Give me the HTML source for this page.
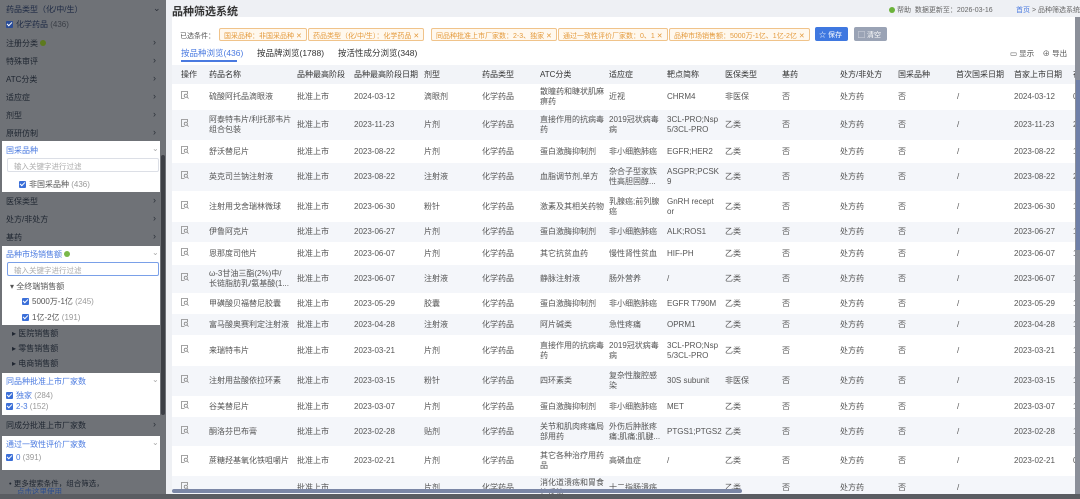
<!DOCTYPE html>
<html><head><meta charset="utf-8">
<style>
*{margin:0;padding:0;box-sizing:border-box}
body{width:1080px;height:499px;overflow:hidden;background:#eef0f4;font-family:"Liberation Sans","Noto Sans CJK SC",sans-serif;font-size:8px;color:#555;position:relative}
.a{position:absolute;white-space:nowrap}
#side{position:absolute;left:0;top:0;width:166px;height:499px;background:#6f7277}
.si{position:absolute;left:6px;color:#1e2530;font-size:8px}
.ar{position:absolute;left:153px;color:#2a2f38;font-size:9px}
.wp{position:absolute;left:2px;width:158px;background:#fff}
.cb{display:inline-block;width:7px;height:7px;background:#3b6fd8;border-radius:1px;vertical-align:-1px;margin-right:3px;position:relative}
.cb:after{content:"";position:absolute;left:2px;top:0px;width:2px;height:4px;border:solid #fff;border-width:0 1px 1px 0;transform:rotate(45deg)}
.blue{color:#4a7ae0}
.inp{position:absolute;left:5px;width:152px;height:14px;border:1px solid #dcdfe6;border-radius:2px;color:#aaa;font-size:7.5px;padding:2px 6px}
#main{position:absolute;left:172px;top:17px;width:904px;height:482px;background:#fff}
.tag{position:absolute;top:28px;height:13px;border:1px solid #f0c38a;border-radius:2px;background:#fff8ee;color:#e49a3c;font-size:7px;padding:2px 4px;white-space:nowrap}
.th{position:absolute;top:65px;height:19px;width:904px;left:172px;background:#f2f4f8}
.row{position:absolute;left:172px;width:904px}
.c{position:absolute;font-size:8px;color:#555;line-height:10px}
.h{position:absolute;font-size:8px;color:#333;top:69px}
</style></head><body>

<div id="side">
 <div class="si" style="top:4px;color:#1e2a44">药品类型（化/中/生）</div><div class="ar" style="top:3px">⌄</div>
 <div class="si" style="top:19px;color:#1e2a44"><span class="cb" style="background:#2a4c96"></span>化学药品 <span style="color:#3b3f47">(436)</span></div>
 <div class="si" style="top:38px">注册分类 <span style="display:inline-block;width:6px;height:6px;border-radius:50%;background:#5d7a1e"></span></div><div class="ar" style="top:37px">›</div>
 <div class="si" style="top:56px">特殊审评</div><div class="ar" style="top:55px">›</div>
 <div class="si" style="top:74px">ATC分类</div><div class="ar" style="top:73px">›</div>
 <div class="si" style="top:92px">适应症</div><div class="ar" style="top:91px">›</div>
 <div class="si" style="top:110px">剂型</div><div class="ar" style="top:109px">›</div>
 <div class="si" style="top:128px">原研仿制</div><div class="ar" style="top:127px">›</div>
 <div class="wp" style="top:141px;height:51px">
  <div class="a blue" style="left:4px;top:4px">国采品种</div><div class="a" style="left:150px;top:3px;color:#aaa">⌄</div>
  <div class="inp" style="top:17px">输入关键字进行过滤</div>
  <div class="a" style="left:17px;top:38px;color:#555"><span class="cb"></span>非国采品种 <span style="color:#999">(436)</span></div>
 </div>
 <div class="si" style="top:196px">医保类型</div><div class="ar" style="top:195px">›</div>
 <div class="si" style="top:214px">处方/非处方</div><div class="ar" style="top:213px">›</div>
 <div class="si" style="top:232px">基药</div><div class="ar" style="top:231px">›</div>
 <div class="wp" style="top:246px;height:79px">
  <div class="a blue" style="left:4px;top:3px">品种市场销售额 <span style="display:inline-block;width:6px;height:6px;border-radius:50%;background:#7ab84a"></span></div><div class="a" style="left:150px;top:2px;color:#aaa">⌄</div>
  <div class="inp" style="top:16px;border-color:#7aa0e8">输入关键字进行过滤</div>
  <div class="a" style="left:8px;top:35px;color:#555">▾ 全终端销售额</div>
  <div class="a" style="left:20px;top:50px;color:#555"><span class="cb"></span>5000万-1亿 <span style="color:#999">(245)</span></div>
  <div class="a" style="left:20px;top:66px;color:#555"><span class="cb"></span>1亿-2亿 <span style="color:#999">(191)</span></div>
 </div>
 <div class="si" style="top:328px;left:12px">▸ 医院销售额</div>
 <div class="si" style="top:343px;left:12px">▸ 零售销售额</div>
 <div class="si" style="top:358px;left:12px">▸ 电商销售额</div>
 <div class="wp" style="top:373px;height:42px">
  <div class="a blue" style="left:4px;top:3px">同品种批准上市厂家数</div><div class="a" style="left:150px;top:2px;color:#aaa">⌄</div>
  <div class="a blue" style="left:4px;top:17px"><span class="cb"></span>独家 <span style="color:#999">(284)</span></div>
  <div class="a blue" style="left:4px;top:29px"><span class="cb"></span>2-3 <span style="color:#999">(152)</span></div>
 </div>
 <div class="si" style="top:420px">同成分批准上市厂家数</div><div class="ar" style="top:419px">›</div>
 <div class="wp" style="top:436px;height:34px">
  <div class="a blue" style="left:4px;top:3px">通过一致性评价厂家数</div><div class="a" style="left:150px;top:2px;color:#aaa">⌄</div>
  <div class="a blue" style="left:4px;top:17px"><span class="cb"></span>0 <span style="color:#999">(391)</span></div>
 </div>
 <div class="a" style="left:9px;top:478px;color:#1e2530;font-size:7.5px">• 更多搜索条件，组合筛选，</div>
 <div class="a" style="left:17px;top:486px;color:#2b4c8c;font-size:7.5px;text-decoration:underline">点击这里使用</div>
 <div class="a" style="left:161px;top:155px;width:4px;height:260px;background:#3c3f45;border-radius:2px"></div>
</div>

<div class="a" style="left:172px;top:3px;font-size:11px;font-weight:bold;color:#333">品种筛选系统</div>
<div class="a" style="left:889px;top:5px;font-size:7px;color:#666"><span style="display:inline-block;width:6px;height:6px;border-radius:50%;background:#6bb33a;vertical-align:-1px"></span> 帮助 &nbsp;数据更新至：2026-03-16</div>
<div class="a" style="left:1016px;top:5px;font-size:7px;color:#666"><span class="blue">首页</span> &gt; 品种筛选系统</div>

<div id="main"></div>
<div class="a" style="left:180px;top:31px;color:#555;font-size:7px">已选条件：</div>
<div class="tag" style="left:219px">国采品种：非国采品种 ✕</div>
<div class="tag" style="left:308px">药品类型（化/中/生）：化学药品 ✕</div>
<div class="tag" style="left:431px">同品种批准上市厂家数：2-3、独家 ✕</div>
<div class="tag" style="left:558px">通过一致性评价厂家数：0、1 ✕</div>
<div class="tag" style="left:669px">品种市场销售额：5000万-1亿、1亿-2亿 ✕</div>
<div class="a" style="left:815px;top:27px;width:33px;height:14px;background:#3f78e0;color:#fff;font-size:7px;padding:3px 4px;border-radius:2px">☆ 保存</div>
<div class="a" style="left:854px;top:27px;width:33px;height:14px;background:#9aa3b5;color:#fff;font-size:7px;padding:3px 4px;border-radius:2px">▢ 清空</div>
<div class="a" style="left:181px;top:47px;font-size:8.5px;color:#4a7ae0">按品种浏览(436)</div>
<div class="a" style="left:181px;top:60px;width:56px;height:2px;background:#4a7ae0"></div>
<div class="a" style="left:257px;top:47px;font-size:8.5px;color:#333">按品牌浏览(1788)</div>
<div class="a" style="left:338px;top:47px;font-size:8.5px;color:#333">按活性成分浏览(348)</div>
<div class="a" style="left:1010px;top:48px;font-size:7.5px;color:#555">▭ 显示 &nbsp;&nbsp;&nbsp;⊕ 导出</div>

<div class="th"></div>
<div class="h" style="left:181px">操作</div><div class="h" style="left:209px">药品名称</div><div class="h" style="left:297px">品种最高阶段</div><div class="h" style="left:354px">品种最高阶段日期</div><div class="h" style="left:424px">剂型</div><div class="h" style="left:482px">药品类型</div><div class="h" style="left:540px">ATC分类</div><div class="h" style="left:609px">适应症</div><div class="h" style="left:667px">靶点简称</div><div class="h" style="left:725px">医保类型</div><div class="h" style="left:782px">基药</div><div class="h" style="left:840px">处方/非处方</div><div class="h" style="left:898px">国采品种</div><div class="h" style="left:956px">首次国采日期</div><div class="h" style="left:1014px">首家上市日期</div><div class="h" style="left:1073px">在</div>

<div id="rows"></div>
<script>
var R=[
[84,26,"硫酸阿托品滴眼液","2024-03-12","滴眼剂","散瞳药和睫状肌麻<br>痹药","近视","CHRM4","非医保","0"],
[110,30,"阿泰特韦片/利托那韦片<br>组合包装","2023-11-23","片剂","直接作用的抗病毒<br>药","2019冠状病毒<br>病","3CL-PRO;Nsp<br>5/3CL-PRO","乙类","2"],
[140,23,"舒沃替尼片","2023-08-22","片剂","蛋白激酶抑制剂","非小细胞肺癌","EGFR;HER2","乙类","1"],
[163,28,"英克司兰钠注射液","2023-08-22","注射液","血脂调节剂,单方","杂合子型家族<br>性高胆固醇...","ASGPR;PCSK<br>9","乙类","2"],
[191,31,"注射用戈舍瑞林微球","2023-06-30","粉针","激素及其相关药物","乳腺癌;前列腺<br>癌","GnRH recept<br>or","乙类","1"],
[222,20,"伊鲁阿克片","2023-06-27","片剂","蛋白激酶抑制剂","非小细胞肺癌","ALK;ROS1","乙类","1"],
[242,23,"恩那度司他片","2023-06-07","片剂","其它抗贫血药","慢性肾性贫血","HIF-PH","乙类","1"],
[265,28,"ω-3甘油三酯(2%)中/<br>长链脂肪乳/氨基酸(1...","2023-06-07","注射液","静脉注射液","肠外营养","/","乙类","1"],
[293,21,"甲磺酸贝福替尼胶囊","2023-05-29","胶囊","蛋白激酶抑制剂","非小细胞肺癌","EGFR T790M","乙类","1"],
[314,21,"富马酸奥赛利定注射液","2023-04-28","注射液","阿片碱类","急性疼痛","OPRM1","乙类","1"],
[335,31,"来瑞特韦片","2023-03-21","片剂","直接作用的抗病毒<br>药","2019冠状病毒<br>病","3CL-PRO;Nsp<br>5/3CL-PRO","乙类","1"],
[366,30,"注射用盐酸依拉环素","2023-03-15","粉针","四环素类","复杂性腹腔感<br>染","30S subunit","非医保","1"],
[396,21,"谷美替尼片","2023-03-07","片剂","蛋白激酶抑制剂","非小细胞肺癌","MET","乙类","1"],
[417,29,"酮洛芬巴布膏","2023-02-28","贴剂","关节和肌肉疼痛局<br>部用药","外伤后肿胀疼<br>痛;肌痛;肌腱...","PTGS1;PTGS2","乙类","1"],
[446,30,"蔗糖羟基氧化铁咀嚼片","2023-02-21","片剂","其它各种治疗用药<br>品","高磷血症","/","乙类","0"],
[476,23,"","","片剂","消化道溃疡和胃食<br>管反流","十二指肠溃疡","","乙类",""]
];
var X=[209,297,354,424,482,540,609,667,725,782,840,898,956,1014,1073];
var ic='<svg width="8" height="8" viewBox="0 0 8 8" fill="none" stroke="#888" stroke-width="0.8"><path d="M6.5 3V0.5H0.5V7.5H3.5"/><circle cx="4.8" cy="4.8" r="1.6"/><path d="M6 6L7.6 7.6"/></svg>';
var h="";
R.forEach(function(r,i){
 var t=r[0],H=r[1];
 h+='<div class="row" style="top:'+t+'px;height:'+H+'px;background:'+(i%2?'#f4f6fa':'#fff')+'"></div>';
 var vals=[r[2],"批准上市",r[3],r[4],"化学药品",r[5],r[6],r[7],r[8],"否","处方药","否","/",r[3],r[9]];
 h+='<div class="c" style="left:181px;top:'+(t+H/2-6)+'px">'+ic+'</div>';
 vals.forEach(function(v,j){
  var two=String(v).indexOf("<br>")>=0;
  var top=t+H/2-(two?10:5);
  h+='<div class="c" style="left:'+(j==12?X[j]+1:X[j])+'px;top:'+top+'px">'+v+'</div>';
 });
});
document.getElementById("rows").innerHTML=h;
</script>
<div class="a" style="left:172px;top:489px;width:570px;height:4px;background:#7b87a6;border-radius:2px"></div>
<div class="a" style="left:0;top:494px;width:1080px;height:5px;background:#5a5d62"></div>
<div class="a" style="left:1075px;top:17px;width:5px;height:477px;background:#8b8f99"></div>
<div class="a" style="left:1076px;top:80px;width:4px;height:170px;background:#6e7fa8"></div>
</body></html>
